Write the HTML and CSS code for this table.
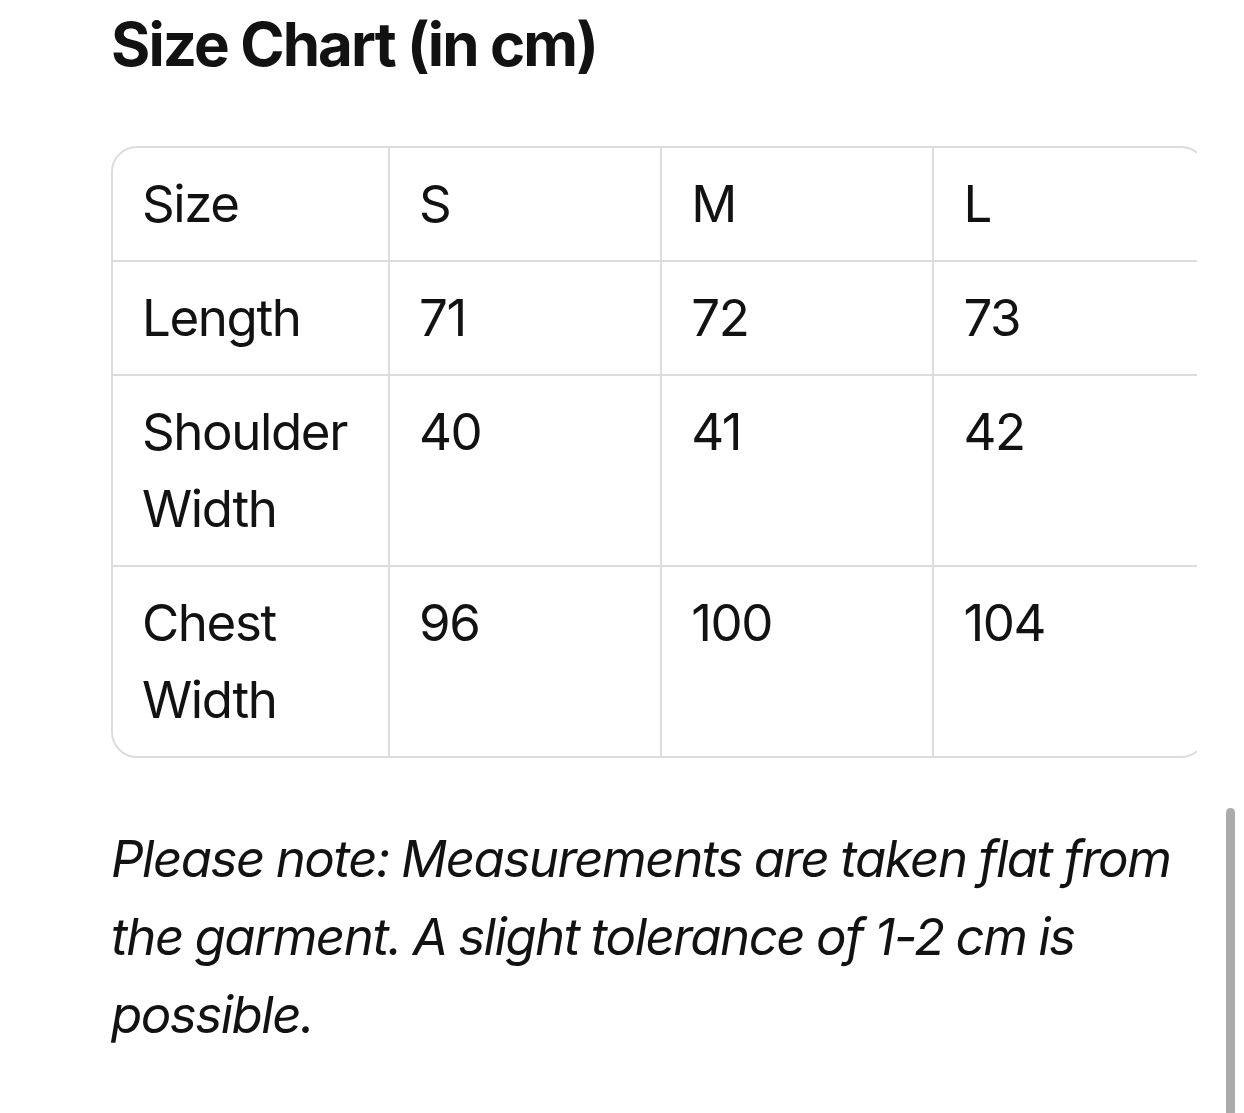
FILE: index.html
```html
<!DOCTYPE html>
<html lang="en">
<head>
<meta charset="utf-8">
<title>Size Chart</title>
<link rel="stylesheet" href="styles.css">
</head>
<body>
<main class="page">
  <h1 class="title">Size Chart (in cm)</h1>
  <div class="table-scroll">
    <table class="size-table">
      <tbody>
        <tr><td>Size</td><td>S</td><td>M</td><td>L</td></tr>
        <tr><td>Length</td><td>71</td><td>72</td><td>73</td></tr>
        <tr><td>Shoulder Width</td><td>40</td><td>41</td><td>42</td></tr>
        <tr><td>Chest Width</td><td>96</td><td>100</td><td>104</td></tr>
      </tbody>
    </table>
  </div>
  <p class="note">Please note: Measurements are taken flat from the garment. A slight tolerance of 1-2 cm is possible.</p>
</main>
<div class="scrollbar"></div>
</body>
</html>
```
FILE: styles.css
```css
html, body {
  margin: 0;
  padding: 0;
  background: #ffffff;
}
body {
  font-family: Inter, "Noto Sans", "Liberation Sans", sans-serif;
  color: #121212;
  overflow: hidden;
}
.page {
  padding: 0 0 0 111px;
  width: 1086px;
}
.title {
  margin: 8px 0 0 0;
  font-size: 60px;
  font-weight: 700;
  line-height: 73px;
  letter-spacing: -1.9px;
}
.table-scroll {
  margin-top: 65px;
  width: 1086px;
  overflow: hidden;
}
.size-table {
  width: 1096px;
  border-collapse: separate;
  border-spacing: 0;
  border: 2px solid #dcdcdc;
  border-radius: 26px;
  font-size: 51px;
  line-height: 77px;
  letter-spacing: -1.4px;
  table-layout: fixed;
}
.size-table td {
  padding: 17px 28px 18px 29px;
  vertical-align: top;
  border-right: 2px solid #dcdcdc;
  border-bottom: 2px solid #dcdcdc;
  width: 25%;
}
.size-table td:first-child {
  width: 218px;
}
.size-table td:last-child {
  border-right: none;
}
.size-table tr:last-child td {
  border-bottom: none;
}
.note {
  margin: 62px 0 0 0;
  font-size: 51px;
  line-height: 78px;
  font-style: italic;
  letter-spacing: -1.5px;
  word-spacing: -1px;
}
.scrollbar {
  position: fixed;
  left: 1226px;
  top: 808px;
  width: 9px;
  height: 320px;
  border-radius: 5px;
  background: #ababab;
}
```
